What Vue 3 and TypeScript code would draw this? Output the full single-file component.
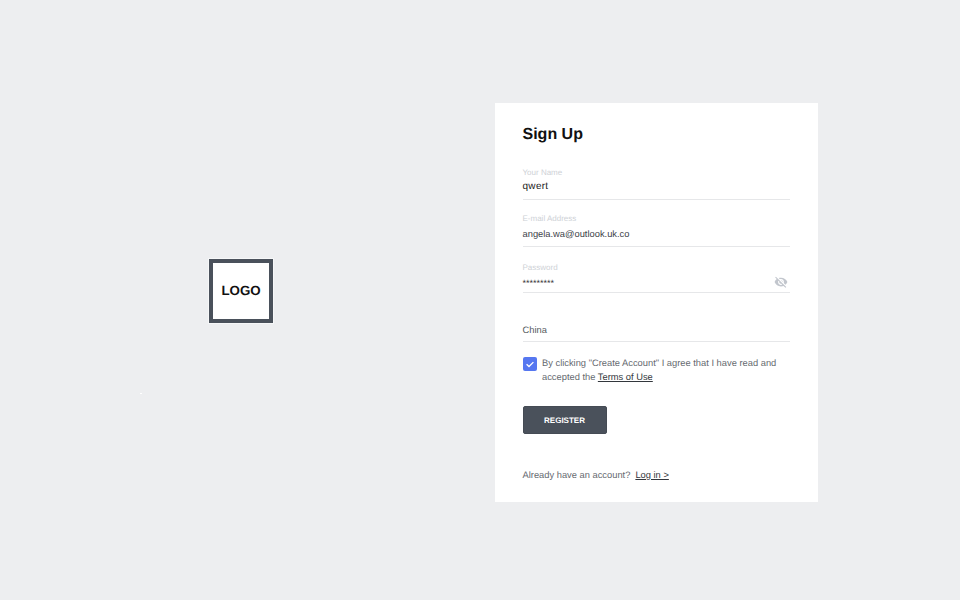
<script setup lang="ts">
interface Field { label: string; value: string; cls: string }
const fields: Field[] = [
  { label: 'Your Name', value: 'qwert', cls: 'f-name' },
  { label: 'E-mail Address', value: 'angela.wa@outlook.uk.co', cls: 'f-mail' },
  { label: 'Password', value: '*********', cls: 'f-pass' },
  { label: '', value: 'China', cls: 'f-country' },
]
</script>

<template>
  <main class="page">
    <span class="speck"></span>
    <section class="brand">
      <div class="logo">LOGO</div>
    </section>
    <section class="card">
      <h1 class="title">Sign Up</h1>
      <div v-for="f in fields" :key="f.cls" class="field" :class="f.cls">
        <div class="label">{{ f.label }}</div>
        <div class="value">{{ f.value }}</div>
        <svg v-if="f.cls === 'f-pass'" class="eye" viewBox="0 0 24 24" width="14" height="14">
          <path fill="#c2c6cd" d="M12 7c2.76 0 5 2.24 5 5 0 .65-.13 1.26-.36 1.83l2.92 2.92c1.51-1.26 2.7-2.89 3.43-4.75-1.73-4.39-6-7.5-11-7.5-1.4 0-2.74.25-3.98.7l2.16 2.16C10.74 7.13 11.35 7 12 7zM2 4.27l2.28 2.28.46.46C3.08 8.3 1.78 10.02 1 12c1.73 4.39 6 7.5 11 7.5 1.55 0 3.03-.3 4.38-.84l.42.42L19.73 22 21 20.73 3.27 3 2 4.27zM7.53 9.8l1.55 1.55c-.05.21-.08.43-.08.65 0 1.66 1.34 3 3 3 .22 0 .44-.03.65-.08l1.55 1.55c-.67.33-1.41.53-2.2.53-2.76 0-5-2.24-5-5 0-.79.2-1.53.53-2.2zm4.31-.78l3.15 3.15.02-.16c0-1.66-1.34-3-3-3l-.17.01z"/>
        </svg>
      </div>
      <div class="agree">
        <span class="check">
          <svg viewBox="0 0 14 14" width="14" height="14">
            <path d="M3.6 7.2l2.4 2.3 4.4-4.4" fill="none" stroke="#fff" stroke-width="1.3"/>
          </svg>
        </span>
        <p class="agree-text">By clicking "Create Account" I agree that I have read and accepted the <a class="link">Terms of Use</a></p>
      </div>
      <button class="register" type="button">REGISTER</button>
      <p class="login">Already have an account?<a class="link login-link">Log in &gt;</a></p>
    </section>
  </main>
</template>

<style>
html, body { margin: 0; background: #edeef0; }
</style>

<style scoped>
.page {
  position: relative;
  box-sizing: border-box;
  width: 960px;
  height: 600px;
  display: flex;
  align-items: flex-start;
  background: #edeef0;
  font-family: "Liberation Sans", Arial, sans-serif;
  text-rendering: geometricPrecision;
}
.speck {
  position: absolute;
  left: 140px;
  top: 393px;
  width: 2px;
  height: 1px;
  background: #fff;
}
.brand {
  width: 494.5px;
  padding: 259px 0 0 209px;
  box-sizing: border-box;
}
.logo {
  box-sizing: border-box;
  width: 64px;
  height: 64px;
  border: 4px solid #4a515b;
  background: #fff;
  display: flex;
  align-items: center;
  justify-content: center;
  padding-bottom: 1px;
  font-size: 13.33px;
  font-weight: 700;
  color: #111;
  outline: 1px solid #f6f7f8;
}
.card {
  box-sizing: border-box;
  margin-top: 103px;
  width: 323.5px;
  height: 399px;
  padding: 21px 28px 0 28px;
  background: #fff;
}
.title {
  margin: 0;
  font-size: 16px;
  line-height: 21px;
  font-weight: 700;
  color: #111;
}
.field {
  position: relative;
  border-bottom: 1px solid #e6e7e9;
  box-sizing: border-box;
}
.f-name { margin-top: 13px; height: 42px; padding-top: 10px; }
.f-mail { height: 47px; padding-top: 14px; }
.f-pass { height: 46px; padding-top: 16px; }
.f-country { height: 49px; padding-top: 18px; }
.label {
  height: 10px;
  font-size: 8px;
  line-height: 10px;
  color: #ced1d6;
}
.value {
  margin-top: 2px;
  font-size: 9.33px;
  line-height: 14px;
  color: #3d4249;
}
.f-name .value { margin-top: 2px; font-size: 10px; color: #222; letter-spacing: 0.3px; }
.f-mail .value { margin-top: 3px; }
.f-pass .value { margin-top: 3px; font-size: 9px; color: #333; }
.f-country .value { color: #555a60; }
.eye {
  position: absolute;
  right: 2.5px;
  top: 28px;
}
.agree {
  display: flex;
  gap: 5.5px;
  margin-top: 14px;
}
.check {
  flex: none;
  width: 14px;
  height: 14px;
  margin-top: 1px;
  border-radius: 2px;
  background: #5677f0;
  display: flex;
}
.agree-text {
  margin: 0;
  font-size: 9.33px;
  line-height: 14px;
  color: #666a70;
}
.link {
  color: #33373d;
  text-decoration: underline;
}
.register {
  display: block;
  margin-top: 22px;
  width: 84px;
  height: 28px;
  padding: 0;
  border: 1px solid #454b54;
  border-radius: 2px;
  background: #4a515b;
  color: #fff;
  font: 700 8px "Liberation Sans", Arial, sans-serif;
  text-rendering: geometricPrecision;
}
.login {
  margin: 34px 0 0;
  font-size: 9.33px;
  line-height: 14px;
  color: #666a70;
}
.login-link { margin-left: 5px; }
</style>
